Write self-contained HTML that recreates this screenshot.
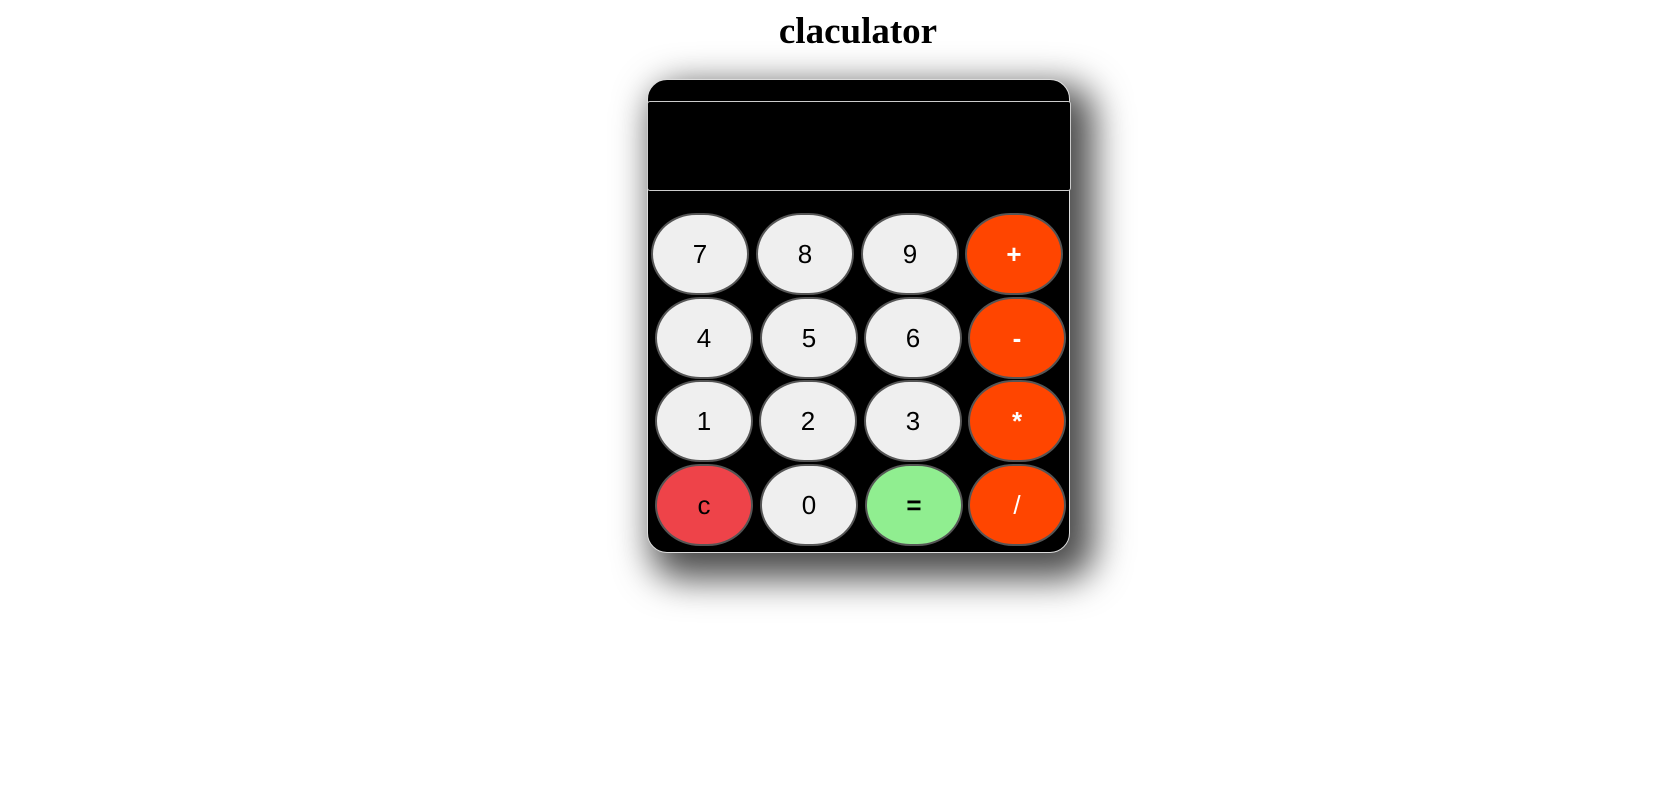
<!DOCTYPE html>
<html><head><meta charset="utf-8"><style>
html,body{margin:0;padding:0;background:#fff;width:1655px;height:802px;overflow:hidden;}
h1{position:absolute;left:0;width:1716px;top:10px;margin:0;text-align:center;font-family:"Liberation Serif",serif;font-weight:bold;font-size:37px;line-height:44px;color:#000;}
.calc{position:absolute;left:647px;top:79px;width:421px;height:472px;background:#000;border:1px solid #ddd;border-radius:20px;box-shadow:14px 16px 36px 10px rgba(0,0,0,0.7);}
.disp{position:absolute;left:647px;top:101px;width:422px;height:88px;background:#000;border:1px solid #ccc;border-radius:3px;}
.b{position:absolute;width:94px;height:78px;border:2px solid #555;border-radius:46% / 50%;background:#efefef;font-family:"Liberation Sans",sans-serif;font-size:26px;color:#000;display:flex;align-items:center;justify-content:center;box-sizing:content-box;}
.o{background:#ff4500;color:#fff;}
.r{background:#ee4349;}
.g{background:#90ee90;font-weight:bold;}
</style></head><body>
<h1>claculator</h1>
<div class="calc"></div>
<div class="disp"></div>
<div class="b" style="left:651px;top:213px">7</div>
<div class="b" style="left:756px;top:213px">8</div>
<div class="b" style="left:861px;top:213px">9</div>
<div class="b o" style="left:965px;top:213px;font-weight:bold">+</div>
<div class="b" style="left:655px;top:297px">4</div>
<div class="b" style="left:760px;top:297px">5</div>
<div class="b" style="left:864px;top:297px">6</div>
<div class="b o" style="left:968px;top:297px;font-weight:bold">-</div>
<div class="b" style="left:655px;top:380px">1</div>
<div class="b" style="left:759px;top:380px">2</div>
<div class="b" style="left:864px;top:380px">3</div>
<div class="b o" style="left:968px;top:380px;font-weight:bold">*</div>
<div class="b r" style="left:655px;top:464px">c</div>
<div class="b" style="left:760px;top:464px">0</div>
<div class="b g" style="left:865px;top:464px">=</div>
<div class="b o" style="left:968px;top:464px">/</div>
</body></html>
